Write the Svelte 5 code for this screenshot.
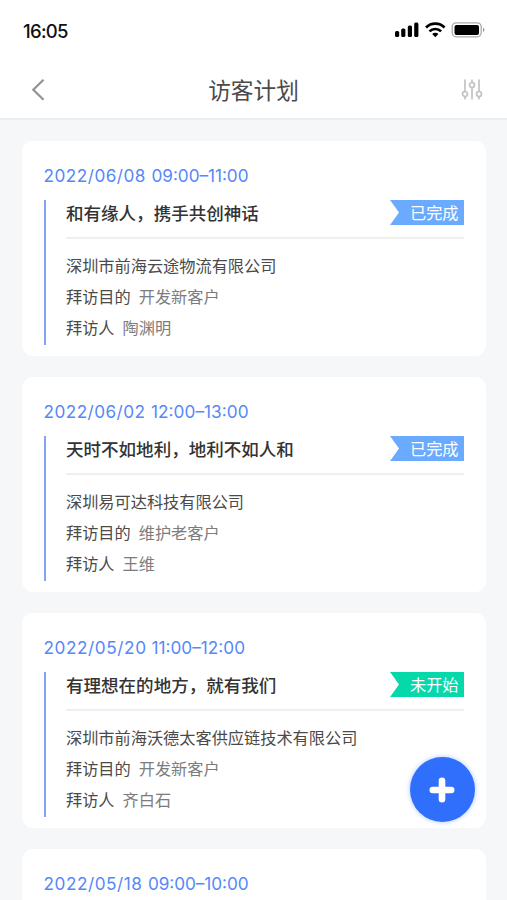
<script>
  const visits = [
    { date: '2022/06/08', dateWidth: 101.5, hours: '09:00–11:00', hoursStart: 107.5, end: 204.5, title: '和有缘人，携手共创神话', status: '已完成', company: '深圳市前海云途物流有限公司', purpose: '开发新客户', visitor: '陶渊明' },
    { date: '2022/06/02', dateWidth: 101, hours: '12:00–13:00', hoursStart: 107, end: 204.5, title: '天时不如地利，地利不如人和', status: '已完成', company: '深圳易可达科技有限公司', purpose: '维护老客户', visitor: '王维' },
    { date: '2022/05/20', dateWidth: 102, hours: '11:00–12:00', hoursStart: 107.5, end: 201, title: '有理想在的地方，就有我们', status: '未开始', company: '深圳市前海沃德太客供应链技术有限公司', purpose: '开发新客户', visitor: '齐白石' },
    { date: '2022/05/18', dateWidth: 98, hours: '09:00–10:00', hoursStart: 104, end: 204.5 }
  ];
</script>

<div class="screen">
  <header>
    <div class="status">
      <span class="clock">16:05</span>
      <svg width="92" height="18" viewBox="0 0 92 18" aria-hidden="true">
        <rect x="1" y="10" width="4.2" height="6" rx="1.5" />
        <rect x="7.2" y="7.5" width="4.2" height="8.5" rx="1.5" />
        <rect x="13.8" y="4.5" width="4.2" height="11.5" rx="1.5" />
        <rect x="20.2" y="1.5" width="4.2" height="14.5" rx="1.5" />
        <g fill="none" stroke="#000" stroke-width="2.7">
          <path d="M32 6.5a13.2 13.2 0 0 1 18.6 0" />
          <path d="M35.500 10.400a8.200 8.200 0 0 1 11.600 0" />
        </g>
        <path d="M41.300 16.300l-3.100-3.200a4.400 4.400 0 0 1 6.200 0z" />
        <rect x="58.200" y="1.800" width="29" height="14" rx="4" fill="#fff" stroke="#aaa" stroke-width="1.300" />
        <rect x="60.500" y="4" width="24.500" height="10" rx="2" />
        <path d="M89 6.500q3 2.300 0 4.600z" fill="#999" />
      </svg>
    </div>
    <nav>
      <svg class="back" width="16" height="24" viewBox="0 0 16 24" aria-hidden="true">
        <path d="M13.500 2.700 3.300 12.700 13.500 22.700" fill="none" stroke="#929292" stroke-width="2.200" />
      </svg>
      <h1>访客计划</h1>
      <svg class="filter" width="22" height="22" viewBox="0 0 22 22" aria-hidden="true">
        <g fill="none" stroke="#c2c2c2" stroke-width="1.700">
          <path d="M4 1.500v12M4 18.500V21.500M11 1.500v3M11 9.500V21.500M18 1.500v12M18 18.500V21.500" />
          <circle cx="4" cy="16" r="2.500" />
          <circle cx="11" cy="7" r="2.500" />
          <circle cx="18" cy="16" r="2.500" />
        </g>
      </svg>
    </nav>
  </header>

  <main>
    {#each visits as v}
      <article>
        <svg class="time" width="210" height="24" aria-label="{v.date} {v.hours}">
          <text x="-0.5" y="17.500" textLength={v.dateWidth + 0.5}>{v.date}</text>
          <text x={v.hoursStart} y="17.500" textLength={v.end - v.hoursStart}>{v.hours}</text>
        </svg>
        {#if v.title}
          <section>
            <div class="head">
              <h2>{v.title}</h2>
              <span class="tag" class:pending={v.status === '未开始'}>{v.status}</span>
            </div>
            <p>{v.company}</p>
            <p>拜访目的<em>{v.purpose}</em></p>
            <p>拜访人<em>{v.visitor}</em></p>
          </section>
        {/if}
      </article>
    {/each}
  </main>

  <button class="add" aria-label="+">
    <svg width="26" height="26" viewBox="0 0 26 26" aria-hidden="true">
      <path d="M13 3.800v18.400M3.800 13h18.400" stroke="#fff" stroke-width="6.600" stroke-linecap="round" />
    </svg>
  </button>
</div>

<style>
  :global(body) { margin: 0; }
  .screen {
    position: relative;
    width: 507px;
    height: 900px;
    overflow: hidden;
    background: #f5f7f9;
    font-family: "Noto Sans CJK SC", sans-serif;
    color: #4a4a4a;
  }
  header {
    box-sizing: border-box;
    height: 120px;
    background: #fff;
    border-bottom: 2px solid #ebedef;
  }
  .status {
    display: flex;
    align-items: center;
    justify-content: space-between;
    height: 60px;
    padding: 0 21px 0 23px;
  }
  .clock {
    font: 500 18.500px/24px Inter, sans-serif;
    letter-spacing: -0.700px;
    color: #111;
    padding-top: 1px;
  }
  nav {
    display: flex;
    align-items: center;
    justify-content: space-between;
    height: 58px;
    padding: 0 24px 0 30px;
  }
  h1 {
    margin: 2px 0 0;
    font-size: 22.700px;
    line-height: 34px;
    font-weight: 400;
    color: #4a4a4a;
  }
  main {
    display: flex;
    flex-direction: column;
    gap: 20.500px;
    padding: 20.500px 21.500px 0 22px;
  }
  article {
    box-sizing: border-box;
    flex: none;
    height: 215.500px;
    padding: 23.500px 21.500px 0 22px;
    background: #fff;
    border-radius: 11px;
  }
  .time { display: block; }
  .time text {
    font: 400 17.200px Inter, sans-serif;
    fill: #5688f8;
  }
  section {
    box-sizing: border-box;
    height: 145px;
    margin-top: 12px;
    padding-left: 20px;
    border-left: 2px solid #83a3f3;
  }
  .head {
    display: flex;
    align-items: flex-start;
    justify-content: space-between;
    box-sizing: border-box;
    height: 39px;
    margin-bottom: 11px;
    border-bottom: 2px solid #f0f0f1;
  }
  h2 {
    margin: 0;
    font-size: 17.550px;
    line-height: 26px;
    font-weight: 500;
    color: #333;
  }
  .tag {
    box-sizing: border-box;
    width: 74px;
    height: 25px;
    padding-left: 20px;
    font-size: 16.200px;
    line-height: 25px;
    color: #fff;
    background: #6aabff;
    clip-path: polygon(0 0, 100% 0, 100% 100%, 0 100%, 9px 50%);
  }
  .tag.pending { background: #05d9ab; }
  p {
    margin: 0;
    font-size: 16.200px;
    line-height: 31px;
    white-space: nowrap;
  }
  em {
    margin-left: 8px;
    font-style: normal;
    color: #7c7c7c;
  }
  .add {
    position: absolute;
    left: 409.500px;
    top: 757px;
    width: 65px;
    height: 65px;
    display: flex;
    align-items: center;
    justify-content: center;
    padding: 0;
    border: 0;
    border-radius: 50%;
    background: #306ffb;
    box-shadow: 0 0 5px rgba(48, 111, 251, 0.4);
  }
</style>
